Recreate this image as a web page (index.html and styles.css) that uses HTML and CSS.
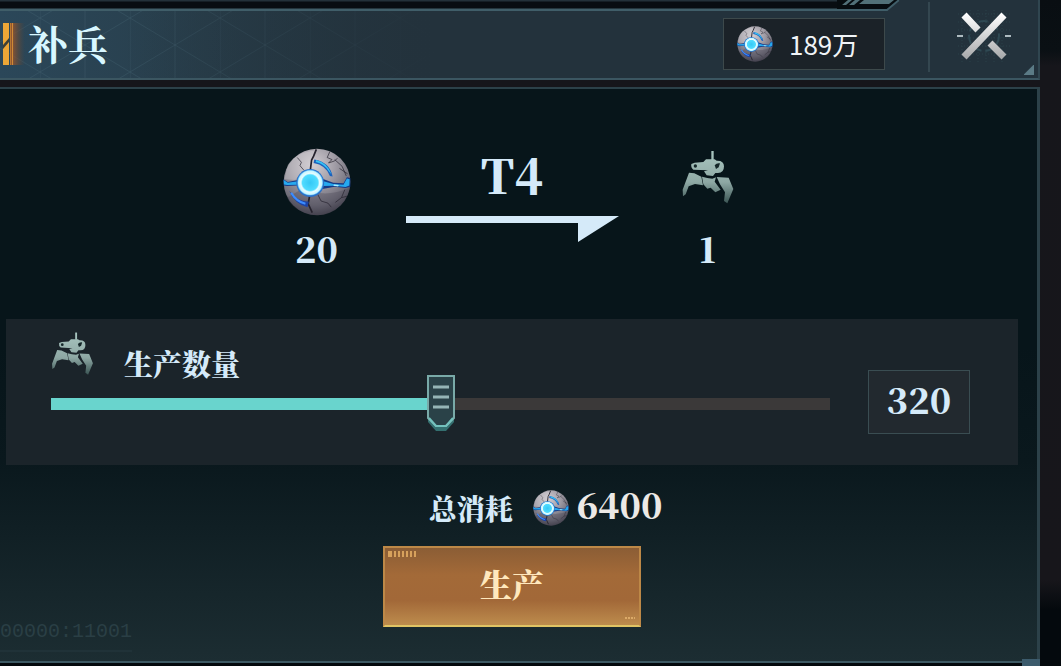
FILE: index.html
```html
<!DOCTYPE html>
<html lang="zh-CN">
<head>
<meta charset="utf-8">
<meta name="viewport" content="width=device-width, initial-scale=1">
<title>补兵</title>
<link rel="stylesheet" href="styles.css">
</head>
<body>
<svg class="sprite" aria-hidden="true">
  <defs>
    <radialGradient id="shell" cx="0.45" cy="0.25" r="0.8">
      <stop offset="0" stop-color="#d2cdd2"/><stop offset="0.4" stop-color="#a19da6"/><stop offset="0.75" stop-color="#6d6b77"/><stop offset="1" stop-color="#34323e"/>
    </radialGradient>
    <radialGradient id="core">
      <stop offset="0" stop-color="#35c8f5"/><stop offset="0.6" stop-color="#4fdcff"/><stop offset="0.72" stop-color="#e6fcff"/><stop offset="0.9" stop-color="#c8f6ff"/><stop offset="1" stop-color="#3aa5f5"/>
    </radialGradient>
    <linearGradient id="metal" gradientUnits="userSpaceOnUse" x1="0" y1="60" x2="0" y2="216">
      <stop offset="0" stop-color="#a9c6c0"/><stop offset="0.6" stop-color="#8ea8a4"/><stop offset="1" stop-color="#3c5655"/>
    </linearGradient>
    <linearGradient id="steel" gradientUnits="userSpaceOnUse" x1="0" y1="8" x2="0" y2="54">
      <stop offset="0" stop-color="#ffffff"/><stop offset="1" stop-color="#a4a6a8"/>
    </linearGradient>
  </defs>
  <symbol id="orb" viewBox="0 0 200 200">
    <circle cx="100" cy="100" r="98" fill="url(#shell)"/>
    <path d="M14 50Q40 10 96 8L82 66Q50 70 36 94L4 92Z" fill="#dedade" opacity="0.35"/>
    <path d="M60 118Q120 150 196 118Q184 184 104 198Q34 192 12 146Z" fill="#4b4955" opacity="0.35"/>
    <g fill="none" stroke="#25222d" stroke-linejoin="round">
      <path d="M98 4L90 24L84 36L80 68" stroke-width="5"/>
      <path d="M42 28L54 42L50 52L62 66M138 10L130 28L144 34L134 44L152 38L160 30M152 34L174 54L186 82M166 60L190 76" stroke-width="2"/>
      <path d="M78 142L74 164L86 190" stroke-width="5"/>
      <path d="M102 136L112 156L132 162L142 174M182 122L172 146L154 160M172 146L188 142" stroke-width="2"/>
    </g>
    <path d="M1 92L14 100L44 94L66 90L120 92L148 102L178 104L188 86L198 88V114L184 118L152 114L120 120L70 122L40 110L12 112L2 110Z" fill="#153a87"/>
    <path d="M2 94L14 102L44 98L42 108L12 109L3 107ZM114 96L148 106L178 108L188 90L196 92L195 110L184 115L150 111L114 112Z" fill="#26a9ef"/>
    <path d="M150 107L164 109L162 113L148 111Z" fill="#a9edff"/>
    <path d="M92 34Q138 42 146 84L138 82Q126 50 90 44Z" fill="#1b61bd"/>
    <path d="M98 35Q132 44 143 78L136 70Q122 46 96 41Z" fill="#36c1f4"/>
    <path d="M18 126Q38 156 76 158L72 174Q36 168 18 126Z" fill="#1c43a5"/>
    <path d="M24 132Q40 158 66 164" fill="none" stroke="#3b8cff" stroke-width="6"/>
    <circle cx="80" cy="103" r="41" fill="#2b6fc4"/>
    <circle cx="80" cy="102" r="38" fill="url(#core)"/>
  </symbol>
  <symbol id="walker" viewBox="64 58 156 160">
    <g fill="url(#metal)">
      <path d="M152 60H159V87H152Z"/>
      <path d="M92 99L102 95L128 93L136 85H162L168 89Q190 88 190 106Q190 126 172 126L164 126L157 135L138 133L130 121L142 118L98 116Q90 110 92 99Z"/>
      <path d="M85 125L101 127L122 137L127 163L103 159L84 166L75 190L67 196L66 176Z"/>
      <path d="M124 137L140 141L155 143L166 139L162 152L180 176L164 184L150 170L140 173L128 160Z"/>
      <path d="M168 138L204 140L218 174L200 217L190 210L193 184L178 160Z"/>
    </g>
    <circle cx="104" cy="105" r="5" fill="#142628"/>
    <path d="M162 103Q168 95 178 97L174 109L166 114Z" fill="#142628"/>
  </symbol>
</svg>

<main class="window">
  <header class="header">
    <div class="top-trim" aria-hidden="true">
      <svg width="64" height="12" viewBox="0 0 64 12">
        <path d="M0 0H63L51 10H0Z" fill="#060c10"/>
        <path d="M5 5L11 0H15L9 5ZM12 5L18 0H23L17 5ZM22 4L27 0H57L52 4Z" fill="#517078"/>
        <path d="M0 10H50L62 0" fill="none" stroke="#405e69" stroke-width="2"/>
      </svg>
    </div>
    <svg class="title-mark" width="22" height="42" viewBox="0 0 22 42" aria-hidden="true">
      <defs><linearGradient id="ember"><stop offset="0" stop-color="#a65a2a"/><stop offset="1" stop-color="#60432f" stop-opacity="0"/></linearGradient></defs>
      <rect x="7" width="15" height="42" fill="url(#ember)"/>
      <rect width="6" height="42" fill="#eda737"/>
      <rect x="7" width="1" height="42" fill="#b87730"/>
      <rect x="9" width="1" height="42" fill="#d08a36"/>
      <path d="M0 26V22L6 15V19Z" fill="#3f4035"/>
    </svg>
    <h1 class="title">补兵</h1>
    <div class="balance">
      <svg class="orb-small" aria-hidden="true"><use href="#orb"/></svg>
      <span>189万</span>
    </div>
    <button class="close" type="button" aria-label="关闭">
      <svg width="60" height="60" viewBox="0 0 60 60" aria-hidden="true">
        <path d="M4 8H56M4 16H56M4 24H56M4 32H56M4 40H56M4 48H56M8 4V56M16 4V56M24 4V56M32 4V56M40 4V56M48 4V56" stroke="#2a4049" stroke-dasharray="1 2"/>
        <circle cx="30" cy="30" r="15" fill="none" stroke="#2f4953" stroke-width="2" stroke-dasharray="9 4"/>
        <path d="M3 30H9M51 30H57" stroke="#aebbc0" stroke-width="2"/>
        <path d="M10 9L24 24M36 37L50 51M10 51L50 9" stroke="url(#steel)" stroke-width="7"/>
      </svg>
    </button>
  </header>

  <section class="panel">
    <div class="recipe">
      <div class="unit">
        <svg class="orb-large" aria-hidden="true"><use href="#orb"/></svg>
        <span class="number">20</span>
      </div>
      <div class="tier">
        <span class="tier-name">T4</span>
        <svg width="213" height="26" viewBox="0 0 213 26" aria-hidden="true"><path d="M0 0H213L172 26V7H0Z" fill="#d5eaf9"/></svg>
      </div>
      <div class="unit">
        <svg class="walker-large" aria-hidden="true"><use href="#walker"/></svg>
        <span class="number">1</span>
      </div>
    </div>

    <div class="amount">
      <div class="amount-control">
        <label class="amount-label" for="quantity">
          <svg class="walker-small" aria-hidden="true"><use href="#walker"/></svg>
          <span>生产数量</span>
        </label>
        <input class="slider" id="quantity" type="range" min="0" max="640" value="320">
      </div>
      <input class="amount-value" type="text" value="320" aria-label="生产数量">
    </div>

    <div class="cost">
      <span class="cost-label">总消耗</span>
      <svg class="orb-small" aria-hidden="true"><use href="#orb"/></svg>
      <span class="cost-value">6400</span>
    </div>

    <button class="produce" type="button">
      <svg class="produce-ticks" width="30" height="6" viewBox="0 0 30 6" aria-hidden="true"><path d="M0 0H4V6H0ZM6 0H8V6H6ZM10 0H12V6H10ZM14 0H16V6H14ZM18 0H20V6H18ZM22 0H24V6H22ZM26 0H28V6H26Z" fill="#d7a15c"/></svg>
      <span>生产</span>
      <svg class="produce-dash" width="10" height="3" viewBox="0 0 10 3" aria-hidden="true"><path d="M0 1H10" stroke="#dcaa68" stroke-width="2" stroke-dasharray="2 1"/></svg>
    </button>
    <span class="serial" aria-hidden="true">00000:11001</span>
  </section>
</main>
</body>
</html>
```
FILE: styles.css
```css
* { box-sizing: border-box; }

:root {
  --ice: #d5eaf9;
  --serif: "Noto Serif CJK SC", "Noto Serif SC", "Liberation Serif", "Noto Sans CJK SC", serif;
}

body {
  margin: 0;
  background: linear-gradient(#090e12 0, #0a1014 50px, #16161b 66px, #17161b 580px, #04090d 610px);
  color: var(--ice);
  font-family: var(--serif);
  font-weight: 900;
}

button, input { font: inherit; color: inherit; margin: 0; }

.sprite { position: absolute; width: 0; height: 0; }

.window {
  display: flex;
  flex-direction: column;
  gap: 7px;
  min-height: 100vh;
  padding: 0 21px 3px 0;
}

.header {
  position: relative;
  display: flex;
  align-items: center;
  height: 80px;
  padding: 10px 24px 0 3px;
  border-right: 2px solid #304650;
  border-bottom: 2px solid #3b5661;
  background:
    linear-gradient(315deg, #5b7b86 7px, transparent 8px) right 4px bottom 3px / 10px 10px no-repeat,
    linear-gradient(90deg, transparent 12%, #23323c 42%),
    url("data:image/svg+xml,%3Csvg xmlns='http://www.w3.org/2000/svg' width='90' height='54'%3E%3Cpath d='M0 0L90 54M90 0L0 54M0 0V54M45 0V54' fill='none' stroke='%2342616e' stroke-opacity='.35'/%3E%3C/svg%3E") 40px 18px,
    linear-gradient(90deg, #2b4759, #283e4b 20%, #23323c 45%);
}

.top-trim {
  position: absolute;
  top: 0;
  left: 0;
  right: 137px;
  display: flex;
  justify-content: flex-end;
  height: 11px;
  background: linear-gradient(#23313a 1px, #080d12 2px 8px, #405e69 9px) left / calc(100% - 64px) 100% no-repeat;
}

.title-mark { flex: none; }

.title {
  flex: 1;
  margin: 0 0 0 3px;
  padding-bottom: 2px;
  font-size: 40px;
  line-height: 48px;
  color: #d8f7ff;
}

.balance {
  display: flex;
  align-items: center;
  gap: 16px;
  width: 162px;
  height: 52px;
  padding-left: 13px;
  border: 1px solid #3d494b;
  background: #1b2228;
  color: #f0f4f8;
  font: 400 26px/32px "Noto Sans CJK SC", sans-serif;
}

.orb-small { width: 36px; height: 36px; flex: none; }

.close {
  align-self: flex-end;
  display: flex;
  align-items: center;
  height: 70px;
  margin: 0 0 6px 43px;
  padding: 0 0 2px 24px;
  border: 0;
  border-left: 2px solid #344750;
  background: none;
  cursor: pointer;
}

.panel {
  position: relative;
  flex: 1;
  display: flex;
  flex-direction: column;
  padding: 54px 19px 32px 6px;
  border: solid #2c4149;
  border-width: 2px 3px 2px 0;
  border-bottom-color: #3d5963;
  background: linear-gradient(#07151a, #07151a 45%, #0a181d 65%, #1c2d32);
}

.panel::after {
  content: "";
  position: absolute;
  right: -3px;
  bottom: -5px;
  width: 18px;
  height: 7px;
  background: #3c5b6c;
}

.recipe {
  display: flex;
  justify-content: center;
  gap: 55px;
}

.unit {
  display: flex;
  flex-direction: column;
  align-items: center;
  justify-content: space-between;
  width: 68px;
  height: 126px;
  padding-top: 5px;
}

.orb-large { width: 68px; height: 68px; }
.walker-large { width: 52px; height: 58px; }
.number { font-size: 35px; line-height: 42px; }

.tier {
  display: flex;
  flex-direction: column;
  align-items: center;
  gap: 14px;
  padding-top: 3px;
}

.tier-name { font-size: 47px; line-height: 56px; }

.amount {
  display: flex;
  align-items: center;
  gap: 38px;
  margin-top: 50px;
  padding: 13px 48px 13px 45px;
  background: #1b242a;
}

.amount-control { flex: 1; min-width: 0; height: 120px; }

.amount-label {
  display: flex;
  align-items: flex-start;
  gap: 30px;
  height: 43px;
  font-size: 29px;
}

.amount-label span { line-height: 64px; }
.walker-small { width: 43px; height: 43px; }

.slider {
  display: block;
  width: 100%;
  height: 57px;
  appearance: none;
  background: linear-gradient(90deg, #69d4cd 50%, #3b3939 50%) center / 100% 12px no-repeat;
}

.slider::-webkit-slider-thumb {
  appearance: none;
  width: 28px;
  height: 57px;
  background: url("data:image/svg+xml,%3Csvg xmlns='http://www.w3.org/2000/svg' width='28' height='57' viewBox='0 0 28 57'%3E%3Cpath d='M1 42V47L9 56H19L27 47V42Z' fill='%23347070'/%3E%3Cpath d='M1 1H27V43L19 51H9L1 43Z' fill='%232a4248' stroke='%2379aaa8' stroke-width='2'/%3E%3Cpath d='M2 43L9 51H19L26 43' fill='none' stroke='%2373c2bd' stroke-width='2'/%3E%3Cpath d='M6 12H22M6 22H22M6 32H22' stroke='%2395b5b6' stroke-width='3'/%3E%3C/svg%3E") center / 100% 100% no-repeat;
}

.amount-value {
  width: 102px;
  height: 64px;
  margin-top: 19px;
  padding: 0 0 6px;
  border: 1px solid #3a4d52;
  background: #22292f;
  font-size: 35px;
  text-align: center;
}

.cost {
  display: flex;
  align-items: center;
  justify-content: center;
  height: 44px;
  margin-top: 21px;
  padding-left: 67px;
  font-size: 28px;
  line-height: 44px;
}

.cost .orb-small { margin: 0 8px 0 20px; }
.cost-value { padding-bottom: 8px; font-size: 35px; line-height: 40px; color: #ece9e6; }

.produce {
  position: relative;
  align-self: center;
  width: 258px;
  height: 81px;
  margin-top: 16px;
  padding: 0 0 8px;
  border: 2px solid #bd8847;
  border-bottom-color: #e0c464;
  background: linear-gradient(#8b5d35, #a36a38 35%, #a26838 68%, #bd8c4d);
  color: #ffe8bd;
  font-size: 32px;
  cursor: pointer;
}

.produce-ticks { position: absolute; top: 3px; left: 3px; }
.produce-dash { position: absolute; right: 4px; bottom: 5px; }

.serial {
  position: absolute;
  left: 0;
  bottom: 9px;
  padding-bottom: 4px;
  border-bottom: 2px solid #203238;
  color: #2a3f45;
  font: 400 20px/28px "Liberation Mono", monospace;
}
```
